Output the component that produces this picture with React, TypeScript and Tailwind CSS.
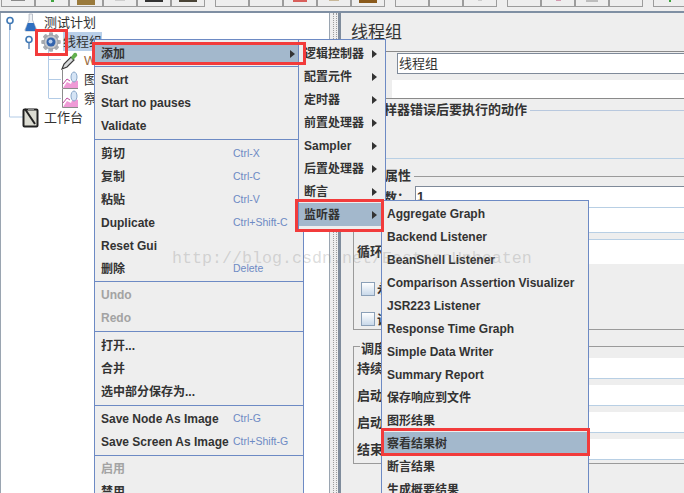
const cjk = '"Liberation Sans", "Noto Sans CJK SC", sans-serif';

type Item = { label?: string; key?: string; arrow?: boolean; active?: boolean; off?: boolean; sep?: string };

const mainMenu: Item[] = [
  { label: '添加', arrow: true, active: true },
  { sep: 'h-[3px]' },
  { label: 'Start' },
  { label: 'Start no pauses' },
  { label: 'Validate' },
  { sep: 'h-[5px]' },
  { label: '剪切', key: 'Ctrl-X' },
  { label: '复制', key: 'Ctrl-C' },
  { label: '粘贴', key: 'Ctrl-V' },
  { label: 'Duplicate', key: 'Ctrl+Shift-C' },
  { label: 'Reset Gui' },
  { label: '删除', key: 'Delete' },
  { sep: 'h-[3px]' },
  { label: 'Undo', off: true },
  { label: 'Redo', off: true },
  { sep: 'h-[5px]' },
  { label: '打开...' },
  { label: '合并' },
  { label: '选中部分保存为...' },
  { sep: 'h-[4px]' },
  { label: 'Save Node As Image', key: 'Ctrl-G' },
  { label: 'Save Screen As Image', key: 'Ctrl+Shift-G' },
  { sep: 'h-[4px]' },
  { label: '启用', off: true },
  { label: '禁用' },
];

const addMenu: Item[] = [
  { label: '逻辑控制器', arrow: true },
  { label: '配置元件', arrow: true },
  { label: '定时器', arrow: true },
  { label: '前置处理器', arrow: true },
  { label: 'Sampler', arrow: true },
  { label: '后置处理器', arrow: true },
  { label: '断言', arrow: true },
  { label: '监听器', arrow: true, active: true },
];

const listenerMenu: Item[] = [
  { label: 'Aggregate Graph' },
  { label: 'Backend Listener' },
  { label: 'BeanShell Listener' },
  { label: 'Comparison Assertion Visualizer' },
  { label: 'JSR223 Listener' },
  { label: 'Response Time Graph' },
  { label: 'Simple Data Writer' },
  { label: 'Summary Report' },
  { label: '保存响应到文件' },
  { label: '图形结果' },
  { label: '察看结果树', active: true },
  { label: '断言结果' },
  { label: '生成概要结果' },
];

function MenuRows({ items, keyCol, pad = 'pl-[6px]' }: { items: Item[]; keyCol?: boolean; pad?: string }) {
  return (
    <>
      {items.map((it, i) =>
        it.sep ? (
          <div key={i} className={`${it.sep} flex items-center`}>
            <div className="h-px w-full bg-[#6d8ac4]" />
          </div>
        ) : (
          <div
            key={i}
            className={`h-[23px] shrink-0 flex items-center ${pad} pr-[8px] text-[12px] font-bold whitespace-nowrap ${
              it.active ? 'bg-[#a3b8cc]' : ''
            } ${it.off ? 'text-[#a3a3a3]' : 'text-[#333333]'}`}
          >
            <span className={keyCol ? 'w-[132px] shrink-0' : 'flex-1'}>{it.label}</span>
            {it.key && <span className="text-[10.5px] font-normal text-[#6d8ac4]">{it.key}</span>}
            {it.arrow && <span className="ml-auto w-0 h-0 border-y-[4px] border-y-transparent border-l-[5px] border-l-[#333333]" />}
          </div>
        ),
      )}
    </>
  );
}

function Handle() {
  return (
    <svg width="10" height="14" viewBox="0 0 10 14">
      <path d="M5 7V14" stroke="#5b86b8" strokeWidth="1.5" />
      <circle cx="5" cy="4.5" r="3" fill="#fff" stroke="#3f78b5" strokeWidth="1.6" />
    </svg>
  );
}

function Flask() {
  return (
    <svg width="16" height="19" viewBox="0 0 16 19">
      <g transform="scale(0.85 1)">
        <path d="M6 1h4v6l5 10q0 1-1 1H2q-1 0-1-1L6 7z" fill="#eef1f5" stroke="#b3bac4" />
        <path d="M4.500 10h7l3 7q0 1-1 1H2.500q-1 0-1-1z" fill="#2f6fc0" />
      </g>
    </svg>
  );
}

function Gear() {
  const teeth = [0, 45, 90, 135, 180, 225, 270, 315];
  return (
    <svg width="20" height="20" viewBox="0 0 20 20">
      {teeth.map((a) => (
        <rect key={a} x="8" y="0.500" width="4" height="19" rx="1" fill="#a9adb3" transform={`rotate(${a} 10 10)`} />
      ))}
      <circle cx="10" cy="10" r="7" fill="#c4c7cc" stroke="#9a9ea5" />
      <circle cx="10" cy="10" r="4.500" fill="#3464ad" />
      <circle cx="9.500" cy="9.500" r="2" fill="#b7cdea" />
    </svg>
  );
}

function Dropper() {
  return (
    <svg width="18" height="18" viewBox="0 0 18 18">
      <path d="M1 17l2-5 7-7 3 3-7 7z" fill="#d8dadc" stroke="#3a3a3a" strokeWidth="1.2" />
      <path d="M10 5l3-4q2-1 3 1t-1 3l-3 3z" fill="#62b04e" />
    </svg>
  );
}

function ChartIcon() {
  return (
    <svg width="17" height="19" viewBox="0 0 17 19">
      <path d="M1.500 0v18.500H17" fill="none" stroke="#8c8c8c" />
      <path d="M2 18l4-6 4 2 2-5 5 2v7z" fill="#ef9ad6" />
      <path d="M2 14l4-5 3 2" fill="none" stroke="#c04ca0" />
      <ellipse cx="13" cy="7" rx="3" ry="5" fill="#d5e4f5" stroke="#8aa7c9" />
    </svg>
  );
}

function Notebook() {
  return (
    <svg width="17" height="20" viewBox="0 0 17 20">
      <rect x="1.500" y="1.500" width="14" height="17" rx="1" fill="#dcdcd2" stroke="#222" strokeWidth="2" />
      <path d="M3 1l10 15" stroke="#222" strokeWidth="2" />
      <path d="M6 1h6" stroke="#888" strokeWidth="2" />
    </svg>
  );
}

function TreeRow({ pad, label, children, selected, labelClass = 'ml-[3px]', color = 'text-[#333333]' }: {
  pad: string;
  label: string;
  children: React.ReactNode;
  selected?: boolean;
  labelClass?: string;
  color?: string;
}) {
  return (
    <div className={`h-[19px] flex items-center ${pad}`}>
      {children}
      <span className={`${labelClass} self-stretch flex items-center text-[13px] ${color} whitespace-nowrap ${selected ? 'bg-[#b9cfe8]' : ''}`}>{label}</span>
    </div>
  );
}

// toolbar button groups, each entry is what peeks out at the bottom of a button
const toolbar: string[][] = [
  ['w-[14px] h-px bg-[#8a8a8a]', 'w-[3px] h-[2px] bg-[#3fa53f]', 'w-[18px] h-[5px] bg-[#9a7a3c]', 'w-[10px] h-px bg-[#cfcfcf]', 'w-[18px] h-[2px] bg-[#333333]', 'w-[18px] h-[2px] bg-[#4a4436]'],
  ['', '', 'w-[14px] h-[2px] bg-[#d9605c]', 'w-[10px] h-px bg-[#c9b99a]', 'w-[18px] h-[3px] bg-[#8a5a1c]'],
  ['', '', 'w-[4px] h-px bg-[#cccccc]'],
  ['', 'w-[5px] h-px bg-[#d49ab0]', 'w-[12px] h-[2px] bg-[#bdbdbd]', ''],
  ['w-[2px] h-[2px] bg-[#3fa53f]'],
];

export default function App() {
  return (
    <div
      className="relative w-[684px] h-[493px] overflow-hidden bg-[#eeeeee] text-[#333333]"
      style={{ fontFamily: cjk }}
    >
      {/* toolbar */}
      <div className="h-[11px] flex gap-[10px] ml-[1px]">
        {toolbar.map((group, g) => (
          <div key={g} className="flex">
            {group.map((mark, i) => (
              <div key={i} className="w-[34px] h-[7px] flex justify-center border-x border-b border-[#9c9c9c]">
                {mark && <div className={mark} />}
              </div>
            ))}
          </div>
        ))}
      </div>

      <div className="h-[482px] flex border-t-2 border-[#7f8fa3]">
        {/* tree */}
        <div className="relative w-[330px] shrink-0 bg-white border-x border-[#9aa5b1]">
          <svg className="absolute left-0 top-0" width="70" height="120">
            <path d="M8.500 12V104H22M47.500 36V85M47.500 46.500H60M47.500 66.500H60M47.500 85.500H60" fill="none" stroke="#b2cbe6" />
          </svg>
          <div className="relative">
            <TreeRow pad="pl-[4px]" label="测试计划" labelClass="ml-[4px]">
              <Handle />
              <span className="ml-[9px] flex"><Flask /></span>
            </TreeRow>
            <TreeRow pad="pl-[23px]" label="线程组" labelClass="ml-[2px]" selected>
              <Handle />
              <span className="ml-[7px] flex"><Gear /></span>
            </TreeRow>
            <TreeRow pad="pl-[60px]" label="W" labelClass="ml-[5px]" color="text-[#9a6a40]">
              <Dropper />
            </TreeRow>
            <TreeRow pad="pl-[60px]" label="图形结果" labelClass="ml-[6px]">
              <ChartIcon />
            </TreeRow>
            <TreeRow pad="pl-[60px]" label="察看结果树" labelClass="ml-[6px]">
              <ChartIcon />
            </TreeRow>
            <TreeRow pad="pl-[21px]" label="工作台" labelClass="ml-[5px]">
              <Notebook />
            </TreeRow>
          </div>
        </div>

        {/* splitter */}
        <div className="w-[11px] shrink-0 flex border-r-[3px] border-[#7f8c9c]">
          <div className="ml-[3px] w-[4px] border-x border-dotted border-[#9c9c9c]" />
        </div>

        {/* form */}
        <div className="flex-1 min-w-0 flex flex-col">
          <div className="h-[38px] pl-[10px] pt-[2px] flex items-center text-[17px]">线程组</div>

          <div className="ml-[43px] h-[48px] border-y border-[#8a8a8a] flex flex-col">
            <div className="ml-[13px] mt-[1px] h-[21px] bg-white border-l border-t border-b border-[#7f8a99] pl-[1px] text-[13px] leading-[19px]">线程组</div>
            <div className="ml-[8px] mt-[6px] flex-1 bg-white" />
          </div>

          <div className="ml-[17px] h-[60px] pt-[1px] border-b border-[#b8cfe4]">
            <div className="h-[20px] flex items-center gap-[3px] text-[13px] font-bold whitespace-nowrap">
              在取样器错误后要执行的动作
              <div className="flex-1 h-px bg-[#b8c8de]" />
            </div>
          </div>

          <div className="ml-[18px] mt-[7px] h-[20px] flex items-center gap-[3px] text-[13px] font-bold whitespace-nowrap">
            线程属性
            <div className="flex-1 h-px bg-[#9a9a9a]" />
          </div>

          {/* loop box: its left edge runs under the menus up to the thread fields */}
          <div className="ml-[12px] h-[144px] border-l border-b border-[#9a9a9a] flex flex-col">
            <div className="flex h-[21px]">
              <span className="w-[61px] pr-[5px] text-[13px] font-bold text-right pt-[2px]">线程数：</span>
              <div className="flex-1 bg-white border-l border-t border-[#7f8a99] pl-[1px] text-[13px] font-bold">1</div>
            </div>
            <div className="ml-[31px] h-[27px] border-y border-[#b8cfe4] bg-white" />
            <div className="mt-[6px] h-[26px] flex items-center">
              <span className="pl-[3px] w-[55px] text-[13px] font-bold">循环次数</span>
              <div className="flex-1 h-full bg-white border-t border-[#b8cfe4]" />
            </div>
            <div className="ml-[7px] mt-[15px] flex items-center gap-[2px] text-[13px] font-bold">
              <div className="w-[14px] h-[14px] border border-[#8ba0b8] bg-gradient-to-b from-white to-[#c9d9ea]" />
              永远
            </div>
            <div className="ml-[7px] mt-[11px] flex items-center gap-[2px] text-[13px] font-bold">
              <div className="w-[14px] h-[14px] border border-[#8ba0b8] bg-gradient-to-b from-white to-[#c9d9ea]" />
              调度器
            </div>
          </div>

          {/* scheduler box */}
          <div className="relative ml-[12px] mt-[16px] h-[118px] pt-[11px] border border-r-0 border-[#9a9a9a] flex flex-col">
            <span className="absolute -top-[8px] left-[6px] bg-[#eeeeee] px-[1px] text-[13px] font-bold whitespace-nowrap">调度</span>
            {['持续', '启动', '启动', '结束'].map((t, i) => (
              <div key={i} className="h-[27px] shrink-0 flex">
                <span className="pl-[3px] pt-[1px] w-[40px] h-[21px] flex items-center whitespace-nowrap text-[13px] font-bold">{t}</span>
                <div className="flex-1 h-[21px] bg-white border-b border-[#b8cfe4]" />
              </div>
            ))}
          </div>
        </div>
      </div>

      {/* watermark */}
      <div className="absolute left-[172px] top-[249px] z-50 text-[16.67px] leading-[20px] text-[#8a8a8a]/30 whitespace-nowrap pointer-events-none" style={{ fontFamily: '"Liberation Mono", monospace' }}>
        http://blog.csdn.net/EasternUnbeaten
      </div>

      {/* context menus */}
      <div className="absolute left-[94px] top-[39px] w-[210px] h-[470px] bg-[#eeeeee] border border-[#6d8ac4] pt-[2px] z-10">
        <MenuRows items={mainMenu} keyCol />
      </div>
      <div className="absolute left-[298px] top-[39px] w-[88px] h-[191px] bg-[#eeeeee] border border-[#6d8ac4] pt-[2px] z-20">
        <MenuRows items={addMenu} pad="pl-[5px]" />
      </div>
      <div className="absolute left-[381px] top-[200px] w-[208px] h-[310px] bg-[#eeeeee] border border-[#6d8ac4] pt-[1px] z-30">
        <MenuRows items={listenerMenu} pad="pl-[5px]" />
      </div>

      {/* red marks */}
      <div className="absolute left-[35px] top-[29px] w-[33px] h-[27px] border-[3px] border-[#f23b3b] z-40" />
      <div className="absolute left-[92px] top-[42px] w-[214px] h-[23px] border-[3px] border-[#f23b3b] z-40" />
      <div className="absolute left-[295px] top-[199px] w-[89px] h-[33px] border-[3px] border-[#f23b3b] z-40" />
      <div className="absolute left-[381px] top-[428px] w-[209px] h-[28px] border-[3px] border-[#f23b3b] z-40" />
    </div>
  );
}
